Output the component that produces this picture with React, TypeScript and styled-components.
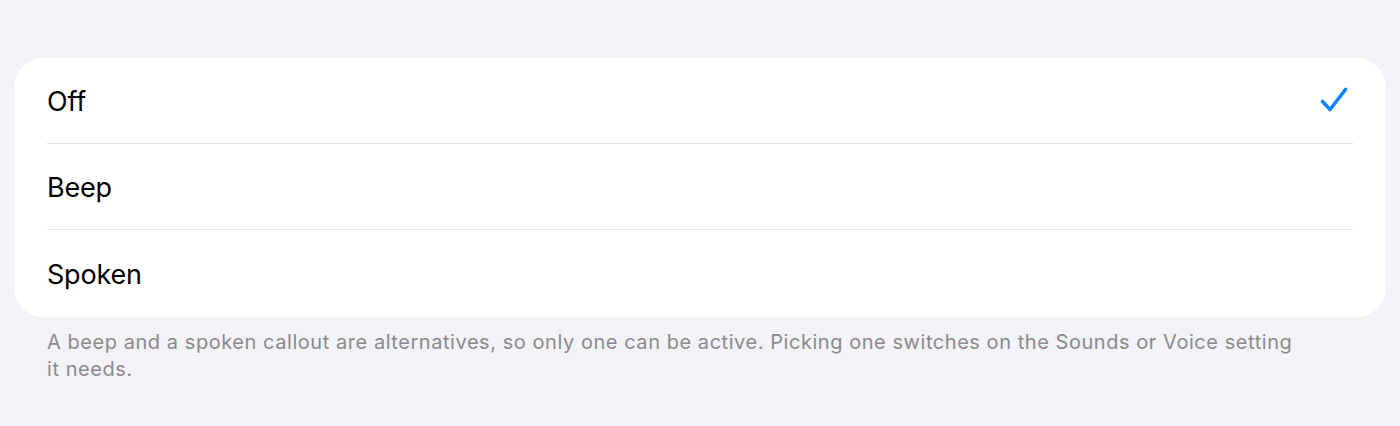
import React from "react";
import styled, { createGlobalStyle } from "styled-components";

const Global = createGlobalStyle`
  html, body { margin: 0; padding: 0; background: #f2f2f7; }
  body { font-family: Inter, "Noto Sans", sans-serif; -webkit-font-smoothing: antialiased; }
`;

const Page = styled.div`
  box-sizing: border-box;
  width: 1400px;
  height: 426px;
  padding: 58px 14px 0 14px;
  background: #f2f2f7;
`;

const Card = styled.ul`
  list-style: none;
  margin: 0;
  padding: 0 33px;
  background: #ffffff;
  border-radius: 30px;
`;

const Row = styled.li<{ $last?: boolean }>`
  display: flex;
  align-items: center;
  justify-content: space-between;
  height: ${(p) => (p.$last ? "87px" : "85px")};
  border-bottom: ${(p) => (p.$last ? "none" : "1px solid #e1e1e4")};
`;

const Label = styled.span`
  font-size: 27px;
  color: #000000;
  letter-spacing: -0.2px;
  padding-top: 2px;
`;

const Check = styled.svg`
  width: 28px;
  height: 26px;
  margin-right: 5px;
  margin-top: -2px;
`;

const Footer = styled.p`
  margin: 12px 0 0 0;
  padding: 0 89px 0 33px;
  font-size: 20px;
  line-height: 27px;
  letter-spacing: 0.55px;
  color: #8a8a8e;
`;

const options = [
  { label: "Off", selected: true },
  { label: "Beep", selected: false },
  { label: "Spoken", selected: false },
];

export default function App() {
  return (
    <>
      <Global />
      <Page>
        <Card>
          {options.map((o, i) => (
            <Row key={o.label} $last={i === options.length - 1}>
              <Label>{o.label}</Label>
              {o.selected && (
                <Check viewBox="0 0 28 26" fill="none">
                  <path
                    d="M2.5 14.5 L10 22.5 L25.5 2.5"
                    stroke="#0a84ff"
                    strokeWidth="3.6"
                    strokeLinecap="round"
                    strokeLinejoin="round"
                  />
                </Check>
              )}
            </Row>
          ))}
        </Card>
        <Footer>
          A beep and a spoken callout are alternatives, so only one can be active. Picking one switches on the Sounds or Voice setting it needs.
        </Footer>
      </Page>
    </>
  );
}
